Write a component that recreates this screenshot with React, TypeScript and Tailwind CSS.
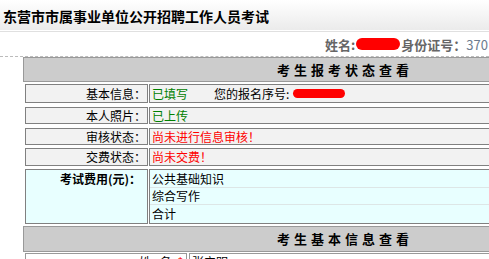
import React from "react";

const font = { fontFamily: '"Noto Sans CJK SC", "Liberation Sans", sans-serif' };

function Row({ label, children, h, mt }: { label: string; children: React.ReactNode; h: string; mt: string }) {
  return (
    <div className={`flex gap-[1px] ${h} ${mt}`}>
      <div className="w-[123px] shrink-0 border border-[#808080] bg-[#f2f2f2] flex items-center justify-end pr-[1px] text-[12px] text-black leading-none">
        {label}
      </div>
      <div className="flex-1 border border-[#808080] bg-[#f2f2f2] flex items-center pl-[2px] text-[12px] leading-none whitespace-nowrap">
        {children}
      </div>
    </div>
  );
}

export default function App() {
  return (
    <div className="w-[489px] h-[259px] overflow-hidden bg-white" style={font}>
      {/* 标题栏 */}
      <div className="h-[30px] bg-gradient-to-b from-white to-[#ebebeb] pl-[3px] pt-[3px] flex items-center">
        <span className="text-[14px] font-bold text-black whitespace-nowrap">东营市市属事业单位公开招聘工作人员考试</span>
      </div>
      <div className="h-[1px] bg-white" />
      <div className="h-[1px] bg-[#e0e0e0]" />

      {/* 姓名行 */}
      <div className="h-[24px] flex items-center pl-[325px] whitespace-nowrap text-[13px] leading-none">
        <span className="font-bold text-[#666]">姓名:</span>
        <span className="inline-block w-[44px] h-[12px] bg-[#ff0000] rounded-full mx-[1px]" />
        <span className="font-bold text-[#666]">身份证号：</span>
        <span className="text-[#6b7b8e]">370</span>
      </div>

      <div className="border-t border-dashed border-[#bbb] pl-[23px]">
        <div className="w-[700px]">
          {/* 考生报考状态查看 */}
          <div className="h-[25px] bg-[#cccccc] border border-[#999] flex items-center pl-[253px]">
            <span className="text-[13px] font-bold tracking-[4px] text-black">考生报考状态查看</span>
          </div>

          <div className="pl-[2px] flex flex-col">
            <Row label="基本信息：" h="h-[19px]" mt="mt-[2px]">
              <span className="text-[#008000]">已填写</span>
              <span className="ml-[26px] text-black">您的报名序号:</span>
              <span className="inline-block w-[52px] h-[9px] bg-[#ff0000] rounded-full ml-[4px]" />
            </Row>
            <Row label="本人照片：" h="h-[17px]" mt="mt-[4px]">
              <span className="text-[#008000]">已上传</span>
            </Row>
            <Row label="审核状态：" h="h-[17px]" mt="mt-[4px]">
              <span className="text-[#ff0000]">尚未进行信息审核！</span>
            </Row>
            <Row label="交费状态：" h="h-[18px]" mt="mt-[3px]">
              <span className="text-[#ff0000]">尚未交费！</span>
            </Row>

            {/* 考试费用 */}
            <div className="flex gap-[1px] h-[55px] mt-[3px]">
              <div className="w-[123px] shrink-0 border border-[#808080] bg-[#e8ffff] flex justify-end pr-[6px] pt-[3px] text-[12px] font-bold text-black leading-none">
                考试费用(元)：
              </div>
              <div className="flex-1 border border-[#808080] bg-[#e8ffff] flex flex-col text-[12px] leading-none">
                <div className="h-[18px] border-b border-[#dde6e6] flex items-center pl-[2px]">公共基础知识</div>
                <div className="h-[17px] border-b border-[#dde6e6] flex items-center pl-[2px]">综合写作</div>
                <div className="flex-1 flex items-center pl-[2px]">合计</div>
              </div>
            </div>
          </div>

          {/* 考生基本信息查看 */}
          <div className="h-[26px] mt-[2px] bg-[#cccccc] border border-[#999] flex items-center pl-[253px]">
            <span className="text-[13px] font-bold tracking-[4px] text-black">考生基本信息查看</span>
          </div>

          <div className="pl-[2px] flex gap-[2px] h-[20px] mt-[1px]">
            <div className="w-[162px] shrink-0 border border-[#999] bg-white flex justify-end pr-[3px] pt-[2px] text-[12px] leading-none">
              <span>姓&nbsp;&nbsp;&nbsp;名</span>
              <span className="text-[#ff0000] ml-[6px]">*</span>
            </div>
            <div className="flex-1 border border-[#999] bg-white pl-[2px] pt-[2px] text-[12px] leading-none">张立明</div>
          </div>
        </div>
      </div>
    </div>
  );
}
